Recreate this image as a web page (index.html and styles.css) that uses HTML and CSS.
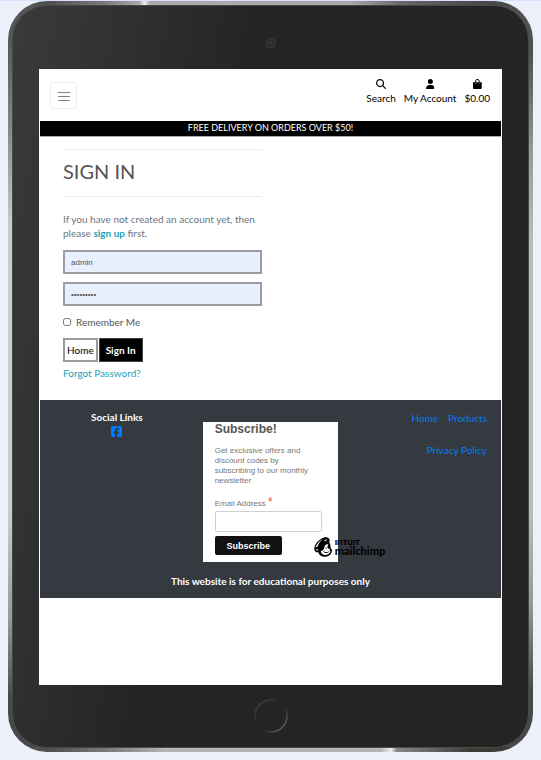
FILE: index.html
```html
<!DOCTYPE html>
<html lang="en">
<head>
<meta charset="utf-8">
<meta name="viewport" content="width=device-width, initial-scale=1">
<title>Sign In</title>
<link rel="stylesheet" href="styles.css">
</head>
<body>
<div class="device">
  <div class="bezel">
    <div class="bezel-top">
      <svg class="camera" viewBox="0 0 12 12" aria-hidden="true"><circle cx="6" cy="6" r="4.500" fill="#29282c" stroke="#36353c" stroke-width="1.500"/><circle cx="6" cy="6" r="1.500" fill="#32323e" stroke="#3c3b4a" stroke-width=".8"/></svg>
    </div>
    <div class="screen">
      <header class="site-header">
        <button class="menu-toggle" type="button" aria-label="Menu">
          <svg viewBox="0 0 12 10" aria-hidden="true"><path d="M0 1.500h12M0 5.500h12M0 9.500h12" stroke="#858585"/></svg>
        </button>
        <nav class="header-nav">
          <a href="#">
            <svg viewBox="0 0 512 512" aria-hidden="true"><path d="M416 208c0 45.900-14.900 88.300-40 122.700L502.600 457.400c12.500 12.500 12.500 32.800 0 45.300s-32.800 12.500-45.300 0L330.700 376c-34.400 25.200-76.800 40-122.700 40C93.100 416 0 322.900 0 208S93.100 0 208 0S416 93.100 416 208zM208 352a144 144 0 1 0 0-288 144 144 0 1 0 0 288z"/></svg>
            <span>Search</span>
          </a>
          <a href="#">
            <svg viewBox="0 0 448 512" aria-hidden="true"><path d="M224 256A128 128 0 1 0 224 0a128 128 0 1 0 0 256zm-45.700 48C79.800 304 0 383.800 0 482.300C0 498.700 13.300 512 29.700 512H418.300c16.400 0 29.700-13.300 29.700-29.700C448 383.800 368.200 304 269.700 304H178.300z"/></svg>
            <span>My Account</span>
          </a>
          <a href="#">
            <svg viewBox="0 0 448 512" aria-hidden="true"><path d="M112 112v48H0v288c0 35.300 28.700 64 64 64h320c35.300 0 64-28.700 64-64V160H336v-48C336 50.100 285.900 0 224 0S112 50.100 112 112zm48 48v-48c0-35.300 28.700-64 64-64s64 28.700 64 64v48H160zm-24 40a24 24 0 1 1 0 48 24 24 0 1 1 0-48zm176 0a24 24 0 1 1 0 48 24 24 0 1 1 0-48z"/></svg>
            <span>$0.00</span>
          </a>
        </nav>
      </header>
      <p class="banner">FREE DELIVERY ON ORDERS OVER $50!</p>
      <main class="content">
        <hr>
        <h1>SIGN IN</h1>
        <hr>
        <p class="intro">If you have not created an account yet, then please <a href="#">sign up</a> first.</p>
        <form class="login">
          <input class="field" type="text" value="admin" aria-label="Username">
          <input class="field" type="password" value="adminpass" aria-label="Password">
          <div class="remember"><input type="checkbox" id="remember"><label for="remember">Remember Me</label></div>
          <div class="actions">
            <a class="btn" href="#">Home</a>
            <button class="btn btn-dark" type="submit">Sign In</button>
          </div>
          <a class="forgot" href="#">Forgot Password?</a>
        </form>
      </main>
      <footer class="site-footer">
        <div class="footer-columns">
          <section class="social">
            <h2>Social Links</h2>
            <a href="#" aria-label="Facebook">
              <svg viewBox="0 0 448 448" aria-hidden="true"><path fill="#007bff" d="M64 0C28.700 0 0 28.700 0 64v320c0 35.300 28.700 64 64 64h98V308h-53v-78h53v-33c0-86 39-126 123-126 16 0 44 3 55 6v70c-6-1-16-1-29-1-41 0-57 16-57 56v28h82l-14 78h-68v140h130c35.300 0 64-28.700 64-64V64c0-35.300-28.700-64-64-64z"/></svg>
            </a>
          </section>
          <form class="subscribe">
            <h2>Subscribe!</h2>
            <p>Get exclusive offers and discount codes by subscribing to our monthly newsletter</p>
            <label for="email">Email Address <span class="required">*</span></label>
            <input id="email" type="email">
            <button type="submit">Subscribe</button>
            <a class="mailchimp" href="#">
              <svg viewBox="0 0 18 20" aria-hidden="true">
                <path fill="#000" d="M.5 13C-.5 9 3 4.500 7 2c2-1.500 5-2.300 7-1.200 2 .8 1.800 3 1.200 4.700 1.800 2 1 4 1.500 6 1.500.5 1.500 2 1 3.500-1 3-3.500 4.800-7 4.800-3 0-5.500-1.500-6.500-4.500C2.500 15.500 1 15 .5 13z"/>
                <path fill="#fff" d="M1.500 10.500C2.500 7 5.500 4 8.500 2.600 5.500 5 4.200 7.500 3.500 9.800zM10 3.800c1-.8 2-1.500 3.500-1.600-.5.800-1.200 1.300-2.200 2zM11.500 8c1-.8 2-.8 3-.3-.8.800-1.200 1.600-1.200 2.500.8 1 1.400 1.700 2.700 1.800l-.5 1.500 1 1c-1 2.500-3.500 4-6 3.500-2.600-.5-3.700-2.300-3.700-4.200 1.500.2 2.700-.5 3.200-2 .3-1.500.5-2.800 1.500-3.800z"/>
                <path d="M11.500 11l1.200.4M9.500 14.500c1.500 1.500 3.800 1.500 5.200.2" fill="none" stroke="#000"/>
                <path d="M2.300 12.700c1-.8 1.700 0 1.600 1" fill="none" stroke="#fff"/>
              </svg>
              <span class="wordmark"><span class="intuit">ınтuıт</span><span>mailchimp</span></span>
            </a>
          </form>
          <nav class="footer-nav">
            <a href="#">Home</a>
            <a href="#">Products</a>
            <a href="#">Privacy Policy</a>
          </nav>
        </div>
        <p class="notice">This website is for educational purposes only</p>
      </footer>
    </div>
    <div class="bezel-bottom">
      <svg class="home-button" viewBox="0 0 36 36" aria-hidden="true">
        <defs><linearGradient id="ring" x1="0" y1="0" x2="1" y2="1"><stop offset="0" stop-color="#505050"/><stop offset=".4" stop-color="#242424"/><stop offset=".6" stop-color="#2c2c2c"/><stop offset="1" stop-color="#757575"/></linearGradient></defs>
        <circle cx="18" cy="18" r="16" fill="none" stroke="url(#ring)" stroke-width="1.500"/>
      </svg>
    </div>
  </div>
</div>
</body>
</html>
```
FILE: styles.css
```css
* { box-sizing: border-box; }

body {
  margin: 0;
  border-top: 1px solid #d6e2fb;
  background: #ecf0fb;
  color: #555;
  font: 10px/14px Lato, sans-serif;
}

h1, h2, p { margin: 0; }
a { text-decoration: none; }
svg { display: block; }
input, button { font: inherit; }

.device {
  display: flex;
  min-height: calc(100vh - 9px);
  margin: 0 8px 8px;
  padding: 4px;
  border-radius: 39px;
  background:
    linear-gradient(90deg, #505050 8%, #777 18%, #aaa 25%, #eee 26%, #aaa 27%, #aaa 65%, #666 75%, #484848 90%) top / 100% 5px no-repeat,
    linear-gradient(90deg, #505050 8%, #777 18%, #b5b5b5 30%, #b5b5b5 71%, #eee 73%, #888 74%, #3d3d38 88%) bottom / 100% 5px no-repeat,
    linear-gradient(#555 5%, #888 17%, #ccc 30%, #ccc 68%, #999 82%, #484848 93%) left / 50% 100% no-repeat,
    linear-gradient(#505050 7%, #999 20%, #bbb 32%, #bbb 68%, #999 80%, #484848 92%) right / 50% 100% no-repeat;
}

.bezel {
  flex: 1;
  display: flex;
  flex-direction: column;
  padding: 0 26px;
  border: 1px solid #484848;
  border-radius: 35px;
  background: linear-gradient(100deg, #3a3a3a, #323232 15%, #242424 38%);
}

.bezel-top {
  display: flex;
  justify-content: center;
  height: 63px;
  padding-top: 31px;
}

.camera { width: 12px; height: 12px; }

.bezel-bottom {
  display: flex;
  align-items: center;
  justify-content: center;
  height: 62px;
}

.home-button { width: 36px; height: 36px; }

.screen {
  flex: 1;
  padding: 0 1px;
  background: #fff;
}

.site-header {
  display: flex;
  align-items: flex-start;
  justify-content: space-between;
  height: 52px;
  padding: 10px 11px 0 10px;
}

.menu-toggle {
  display: grid;
  place-items: center;
  width: 27px;
  height: 27px;
  margin-top: 3px;
  padding: 0;
  border: 1px solid #eee;
  border-radius: 3px;
  background: #fff;
}

.menu-toggle svg { width: 12px; height: 10px; }

.header-nav { display: flex; gap: 8px; }

.header-nav a {
  display: flex;
  flex-direction: column;
  align-items: center;
  gap: 2px;
  color: #000;
}

.header-nav svg { height: 10px; }

.banner {
  height: 16px;
  border-bottom: 1px solid #aaa;
  background: #000;
  color: #fff;
  font-size: 9px;
  text-align: center;
}

.content {
  width: 50%;
  min-width: 220px;
  padding: 12px 9px 20px 23px;
}

.content hr {
  height: 1px;
  margin: 0;
  border: 0;
  background: #ececec;
}

.content h1 {
  padding: 9px 0 13px;
  font-size: 20px;
  font-weight: 400;
  line-height: 24px;
}

.intro { margin: 15px 0 10px; color: #6c757d; }
.intro a, .forgot { color: #17a2b8; }
.intro a { font-weight: 700; }

.login {
  display: flex;
  flex-direction: column;
  align-items: flex-start;
}

.field {
  width: 100%;
  height: 24px;
  margin-bottom: 8px;
  padding: 0 6px;
  border: 2px solid #9c9ca2;
  border-radius: 0;
  background: #e8f0fe;
  color: #555;
  font: 8px "Liberation Sans", sans-serif;
}

.remember {
  display: flex;
  align-items: center;
  gap: 5px;
  margin: 1px 0 9px;
}

.remember input {
  width: 8px;
  height: 8px;
  margin: 0;
}

.actions { display: flex; gap: 1px; margin-bottom: 4px; }

.btn {
  height: 24px;
  padding: 0 2px;
  border: 2px solid #999;
  background: #fff;
  color: #000;
  line-height: 20px;
}

.btn-dark {
  padding: 0 6px;
  border: 1px solid #444;
  background: #000;
  color: #fff;
  font-weight: 700;
}

.site-footer {
  padding: 10px 0;
  background: #343a40;
  color: #fff;
}

.footer-columns {
  display: grid;
  grid-template-columns: repeat(3, 1fr);
}

.social {
  display: flex;
  flex-direction: column;
  align-items: center;
  gap: 2px;
}

.social h2 { font-size: 10px; line-height: 14px; }
.social svg { width: 11px; height: 11px; }

.subscribe {
  position: relative;
  height: 140px;
  margin: 12px 9px 0;
  padding: 0 16px 0 12px;
  background: #fff;
  color: #777;
  font: 8px/10px "Liberation Sans", sans-serif;
}

.subscribe h2 {
  color: #555;
  font-size: 12px;
  line-height: 14px;
}

.subscribe p { max-width: 100px; margin: 10px 0 11px; }
.subscribe label { display: block; line-height: 14px; }
.required { color: #e85c41; font-size: 12px; line-height: 10px; }

.subscribe input {
  display: block;
  width: 100%;
  height: 21px;
  margin: 0 0 4px;
  padding: 0 4px;
  border: 1px solid #d0d0d0;
  border-radius: 2px;
  background: #fff;
}

.subscribe button {
  width: 67px;
  height: 19px;
  padding: 0;
  border: 0;
  border-radius: 2px;
  background: #111;
  color: #fff;
  font-size: 9px;
  font-weight: 700;
}

.mailchimp {
  position: absolute;
  left: 111px;
  bottom: 5px;
  display: flex;
  align-items: center;
  gap: 3px;
  color: #000;
}

.mailchimp svg { width: 18px; height: 20px; }

.wordmark {
  display: flex;
  flex-direction: column;
  font: 900 11px/10px Lato, sans-serif;
}

.intuit { font: 700 9px/8px Inter, sans-serif; }

.footer-nav {
  display: flex;
  flex-wrap: wrap;
  align-content: flex-start;
  justify-content: flex-end;
  gap: 18px 10px;
  padding: 1px 14px 0 0;
}

.footer-nav a { color: #007bff; }

.notice {
  padding-top: 12px;
  font-weight: 700;
  text-align: center;
}
```
